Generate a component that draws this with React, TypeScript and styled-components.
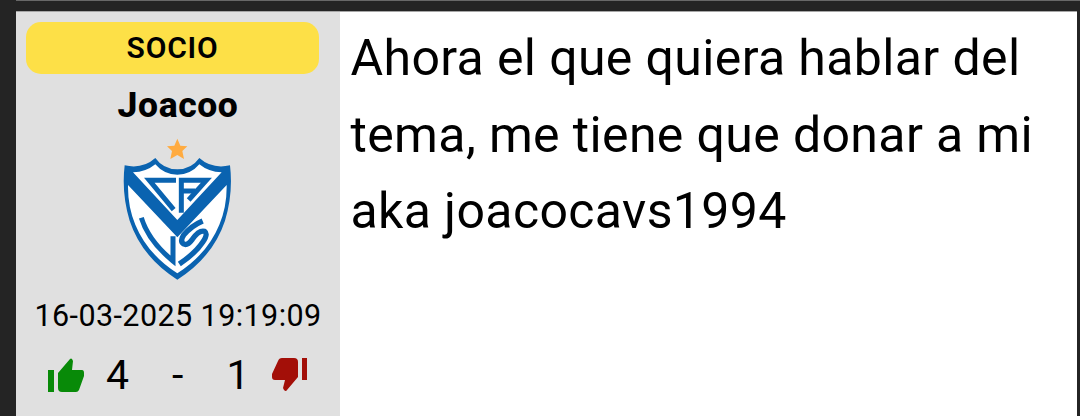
import React from "react";
import styled, { createGlobalStyle } from "styled-components";

const GlobalStyle = createGlobalStyle`
  * { box-sizing: border-box; }
  body {
    margin: 0;
    background: #242424;
    color: #000;
    font-family: Roboto, "Liberation Sans", sans-serif;
    overflow: hidden;
  }
`;

const Page = styled.main`
  height: 416px;
  padding: 0 3px 0 16px;
  display: flex;
  flex-direction: column;
`;

const PreviousPostEdge = styled.div`
  height: 11px;
  flex: none;
  margin-right: -3px;
  border-top: 1px solid #686868;
`;

const Post = styled.article`
  flex: 1;
  display: flex;
  border-top: 1px solid #a6a6a6;
  background: #fff;
`;

const Author = styled.aside`
  width: 324px;
  flex: none;
  padding: 10px 21px 0 10px;
  background: #e0e0e0;
  display: flex;
  flex-direction: column;
  align-items: center;
`;

const Badge = styled.div`
  width: 293px;
  height: 52px;
  flex: none;
  border-radius: 15px;
  background: #fde047;
  text-align: center;
  font-size: 30px;
  font-weight: 600;
  line-height: 52px;
  letter-spacing: 0.8px;
`;

const Name = styled.div`
  height: 50px;
  margin-top: 6px;
  font-size: 35.5px;
  font-weight: 800;
  line-height: 50px;
  letter-spacing: 0.6px;
  padding-left: 11px;
  white-space: nowrap;
`;

const Crest = styled.svg`
  width: 140px;
  height: 155px;
  flex: none;
  align-self: flex-start;
  margin-left: 84px;
`;

const Timestamp = styled.time`
  height: 40px;
  margin-top: 11px;
  padding-left: 11px;
  font-size: 30.5px;
  line-height: 40px;
  letter-spacing: 0.42px;
  white-space: nowrap;
`;

const Votes = styled.div`
  height: 50px;
  margin-top: 14px;
  align-self: stretch;
  display: flex;
  align-items: center;
  font-size: 41px;
  line-height: 50px;
  padding-left: 21px;
`;

const Count = styled.span<{ $left: number }>`
  margin-left: ${(p) => p.$left}px;
`;

const Thumb = styled.svg<{ $left?: number }>`
  width: 38px;
  height: 36px;
  flex: none;
  margin-left: ${(p) => p.$left ?? 0}px;
`;

const Message = styled.p`
  margin: 0;
  padding: 8px 0 0 10.5px;
  font-size: 50px;
  line-height: 76.7px;
  letter-spacing: 0.37px;
  white-space: nowrap;
`;

const blue = "#0a63b0";

function ClubCrest() {
  return (
    <Crest viewBox="0 0 420 465" role="img" aria-label="CAVS">
      <path fill="#ffab40" d="M202 26 211 47 232 49 217 63 222 87 202 75 181 87 186 63 171 49 193 47Z" />
      <path
        fill={blue}
        d="M44 106Q98 118 136 84Q160 118 202 118Q244 118 268 84Q306 118 360 106Q370 190 345 272Q309 381 202 449Q95 381 59 272Q34 190 44 106Z"
      />
      <path fill="#fff" d="M69 127Q108 126 136 103Q162 134 202 134Q242 134 268 103Q296 126 335 127L202 270Z" />
      <path fill="#fff" d="M54 165 202 322 350 165Q351 230 328 284Q292 372 202 430Q112 372 76 284Q53 230 54 165Z" />
      <g fill="none" stroke={blue} strokeWidth="15">
        <path d="M198 151H118L191 239" />
        <path d="M214 248V151H289L236 210" />
        <path d="M214 183H256" />
        <path d="M94 263Q115 332 189 393V319" />
        <path
          strokeWidth="16"
          d="M278 273Q245 287 221 315Q209 334 221 342Q232 348 247 328Q267 299 284 304Q295 312 278 337Q257 369 208 402"
        />
      </g>
    </Crest>
  );
}

export default function App() {
  return (
    <>
      <GlobalStyle />
      <Page>
        <PreviousPostEdge />
        <Post>
          <Author>
            <Badge>SOCIO</Badge>
            <Name>Joacoo</Name>
            <ClubCrest />
            <Timestamp>16-03-2025 19:19:09</Timestamp>
            <Votes>
              <Thumb viewBox="0 0 38 36" fill="#088a08">
                <path d="M1 13H7V35H1ZM11 16 23 2Q24 1 25 2L26 4 25 13H35Q37 13 37 16V19L32 33Q31 35 29 35H15Q11 35 11 31Z" />
              </Thumb>
              <Count $left={21}>4</Count>
              <Count $left={43}>-</Count>
              <Count $left={43}>1</Count>
              <Thumb $left={22} viewBox="0 0 38 36" fill="#a30f08">
                <path d="M31 1H36V23H31ZM27 5V20L16 33Q15 35 13 33L12 31 14 23H4Q1 23 1 20V17L7 4Q8 1 11 1H23Q27 1 27 5Z" />
              </Thumb>
            </Votes>
          </Author>
          <Message>
            Ahora el que quiera hablar del
            <br />
            tema, me tiene que donar a mi
            <br />
            aka joacocavs1994
          </Message>
        </Post>
      </Page>
    </>
  );
}
